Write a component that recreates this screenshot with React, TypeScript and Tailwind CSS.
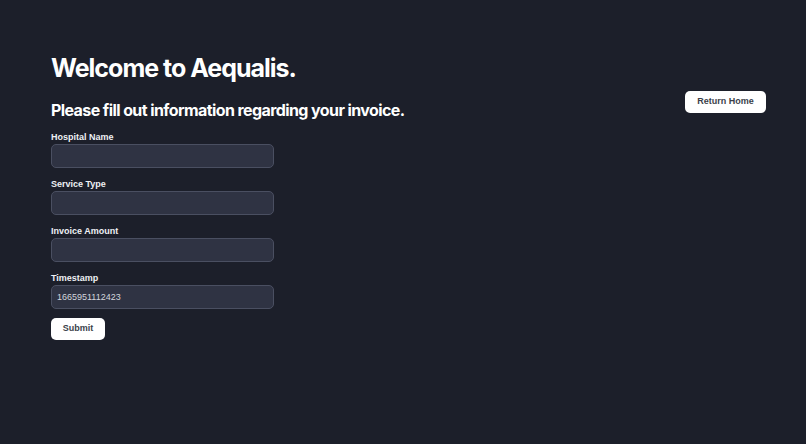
const FIELDS = [
  { label: "Hospital Name", value: "" },
  { label: "Service Type", value: "" },
  { label: "Invoice Amount", value: "" },
  { label: "Timestamp", value: "1665951112423" },
];

export default function App() {
  return (
    <div className="min-h-[444px] w-full bg-[#1c1f2a] font-['Inter',sans-serif] text-white">
      <div className="flex justify-between pl-[51px] pr-[40px] pt-[53px]">
        <div className="flex flex-col">
          <h1 className="text-[25px] font-bold leading-[30px] tracking-[-0.04em]">
            Welcome to Aequalis.
          </h1>
          <h2 className="mt-[17px] text-[16px] font-bold leading-[20px] tracking-[-0.037em]">
            Please fill out information regarding your invoice.
          </h2>
          <form
            className="flex flex-col font-['Liberation_Sans',Arial,sans-serif]"
            onSubmit={(e) => e.preventDefault()}
          >
            {FIELDS.map((f, i) => (
              <div key={f.label} className={i === 0 ? "mt-[11px]" : "mt-[10px]"}>
                <label className="block text-[9px] font-bold leading-[12px] text-[#eef0f4]">
                  {f.label}
                </label>
                <input
                  defaultValue={f.value}
                  className="mt-[1px] block h-[24px] w-[223px] rounded-[5px] border border-[#4a4f61] bg-[#2f3343] px-[5px] text-[9px] text-[#d3d6dd] outline-none"
                />
              </div>
            ))}
            <button
              type="submit"
              className="mt-[9px] h-[22px] w-[54px] rounded-[5px] bg-white text-[9px] font-bold text-[#3b3f4a]"
            >
              Submit
            </button>
          </form>
        </div>
        <button className="mt-[38px] h-[22px] w-[81px] rounded-[5px] bg-white font-['Liberation_Sans',Arial,sans-serif] text-[9px] font-bold text-[#3b3f4a]">
          Return Home
        </button>
      </div>
    </div>
  );
}
